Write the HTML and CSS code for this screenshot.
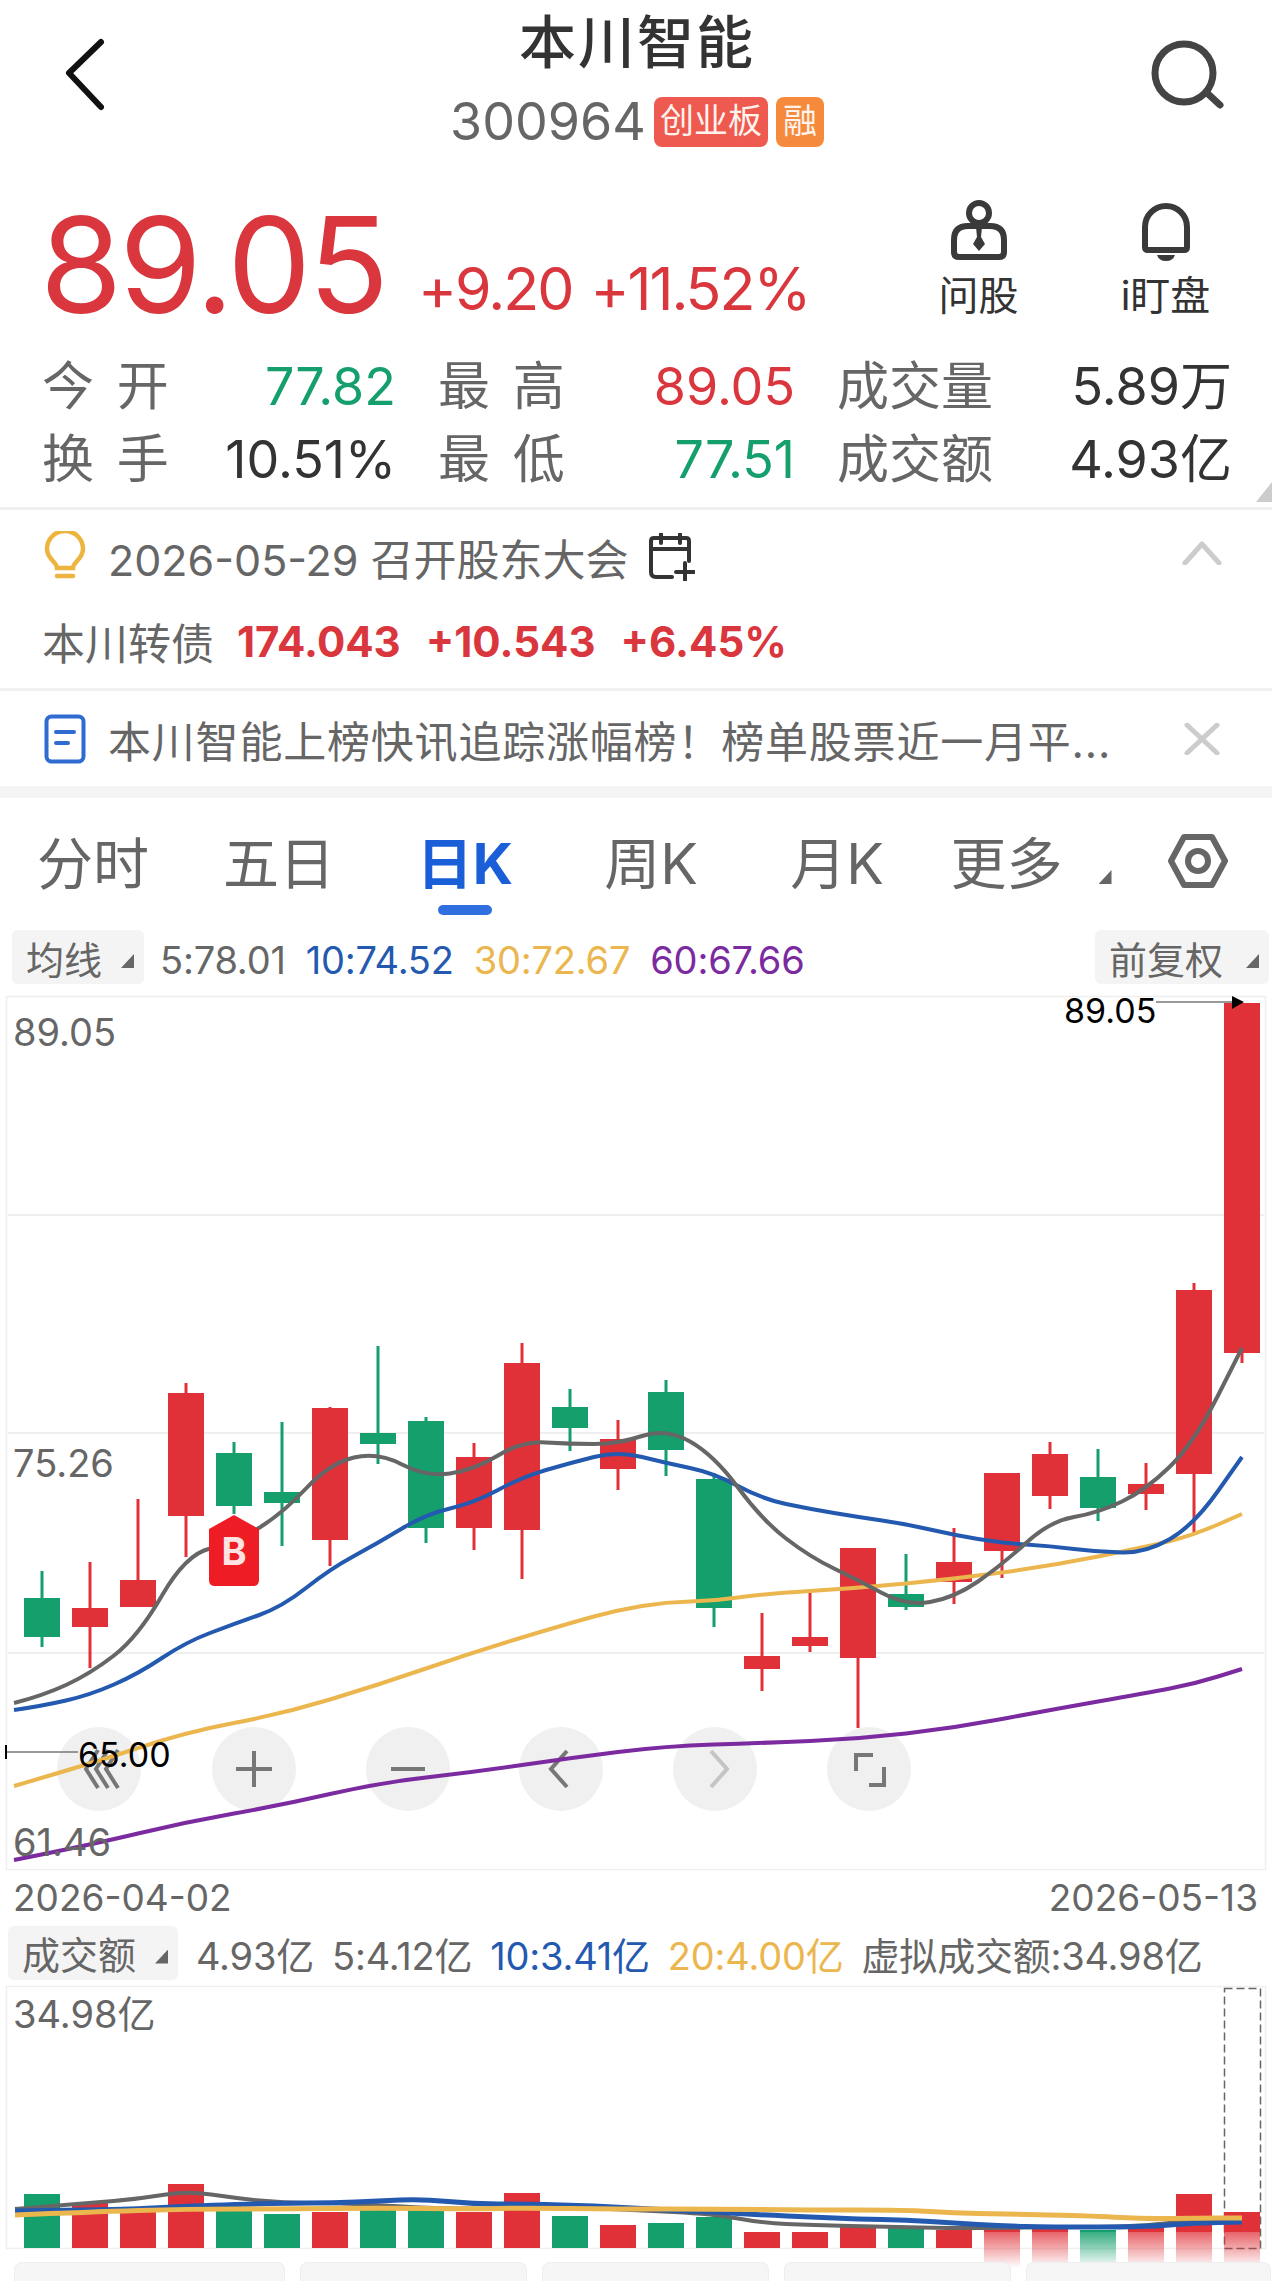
FILE: index.html
```
<!DOCTYPE html>
<html>
<head>
  <title>本川智能 300964</title>
  <meta name="viewport" content="width=device-width, initial-scale=1.0">
  <link rel="stylesheet" href="styles.css">
</head>
<body>
  <div class="header">
    <svg class="icon back-icon" viewBox="0 0 48 78"><path d="M41 6 L9 37 L41 71" /></svg>
    <div class="title-block">
      <h1 class="title">本川智能</h1>
      <div class="sub-title">
        <span class="code">300964</span>
        <span class="badge badge-red">创业板</span>
        <span class="badge badge-orange">融</span>
      </div>
    </div>
    <svg class="icon search-icon" viewBox="0 0 80 72"><circle cx="36" cy="34" r="29" /><path d="M59 54 L72 66" /></svg>
  </div>

  <div class="quote">
    <span class="price">89.05</span>
    <span class="change">+9.20</span>
    <span class="change">+11.52%</span>
    <div class="quick-links">
      <div class="quick-link">
        <svg class="icon" viewBox="0 0 60 62">
          <circle cx="30" cy="13" r="10" />
          <path d="M19 26 H41 Q55 26 55 40 V52 Q55 57 50 57 H10 Q5 57 5 52 V40 Q5 26 19 26 Z" />
          <path class="solid" d="M27 27 H33 L32 37 L36 44 L30 51 L24 44 L28 37 Z" />
        </svg>
        <span>问股</span>
      </div>
      <div class="quick-link">
        <svg class="icon" viewBox="0 0 60 62">
          <path d="M9 47 V27 A21 21 0 0 1 51 27 V47 Q51 50 48 50 H12 Q9 50 9 47 Z" />
          <path class="solid" d="M21 55 H39 Q37 61 30 61 Q23 61 21 55 Z" />
        </svg>
        <span>i盯盘</span>
      </div>
    </div>
  </div>

  <div class="stats">
    <div class="stat"><span class="stat-label spaced">今 开</span><span class="green">77.82</span></div>
    <div class="stat"><span class="stat-label spaced">最 高</span><span class="red">89.05</span></div>
    <div class="stat"><span class="stat-label">成交量</span><span>5.89万</span></div>
    <div class="stat"><span class="stat-label spaced">换 手</span><span>10.51%</span></div>
    <div class="stat"><span class="stat-label spaced">最 低</span><span class="green">77.51</span></div>
    <div class="stat"><span class="stat-label">成交额</span><span>4.93亿</span></div>
    <i class="corner-mark"></i>
  </div>

  <div class="notice">
    <div class="notice-row">
      <svg class="icon bulb-icon" viewBox="0 0 42 52">
        <path d="M13 37 C13 31 3 28 3 18 A18 18 0 0 1 39 18 C39 28 29 31 29 37 Z" />
        <path d="M13 45 H29" />
      </svg>
      <span class="notice-date">2026-05-29 召开股东大会</span>
      <svg class="icon calendar-icon" viewBox="0 0 48 48">
        <path d="M4 16 V8 Q4 5 7 5 H39 Q42 5 42 8 V28 M4 16 H42 M4 16 V39 Q4 44 9 44 H25 M14 1 V10 M33 1 V10 M29 39 H47 M38 30 V47" />
      </svg>
      <svg class="icon chevron-icon" viewBox="0 0 40 24"><path d="M3 22 L20 3 L37 22" /></svg>
    </div>
    <div class="bond-row">
      <span class="bond-name">本川转债</span>
      <b>174.043</b>
      <b>+10.543</b>
      <b>+6.45%</b>
    </div>
  </div>

  <div class="news">
    <svg class="icon doc-icon" viewBox="0 0 42 50">
      <rect x="2.5" y="2.5" width="37" height="45" rx="5" />
      <path d="M12 18 H30 M12 29 H24" />
    </svg>
    <span class="news-text">本川智能上榜快讯追踪涨幅榜！榜单股票近一月平...</span>
    <svg class="icon close-icon" viewBox="0 0 40 32"><path d="M5 2 L35 30 M35 2 L5 30" /></svg>
  </div>

  <div class="band"></div>

  <div class="tabs">
    <span class="tab">分时</span>
    <span class="tab">五日</span>
    <span class="tab active">日K</span>
    <span class="tab">周K</span>
    <span class="tab">月K</span>
    <span class="tab more">更多<i class="caret"></i></span>
    <svg class="icon gear-icon" viewBox="0 0 60 60">
      <path d="M16 6 H44 L57 30 L44 54 H16 L3 30 Z" />
      <circle cx="30" cy="30" r="10" />
    </svg>
  </div>

  <div class="legend">
    <span class="pill">均线<i class="caret"></i></span>
    <span class="ma ma5 first">5:78.01</span>
    <span class="ma ma10">10:74.52</span>
    <span class="ma ma30">30:72.67</span>
    <span class="ma ma60">60:67.66</span>
    <span class="pill pill-right">前复权<i class="caret"></i></span>
  </div>

  <svg id="kline" class="kline" viewBox="0 996 1272 874"></svg>

  <div class="dates">
    <span>2026-04-02</span>
    <span>2026-05-13</span>
  </div>

  <div class="legend legend-volume">
    <span class="pill">成交额<i class="caret"></i></span>
    <span class="ma ma5 first">4.93亿</span>
    <span class="ma ma5">5:4.12亿</span>
    <span class="ma ma10">10:3.41亿</span>
    <span class="ma ma20">20:4.00亿</span>
    <span class="ma ma5">虚拟成交额:34.98亿</span>
  </div>

  <svg id="volume" class="volume" viewBox="0 1986 1272 262"></svg>

  <div class="bottom-pills">
    <span></span><span></span><span></span><span></span><span></span>
  </div>

  <script>
    const RED = '#e03138';
    const GREEN = '#149f6c';
    const GRAY = '#666666';
    const BLUE = '#2459b0';
    const YELLOW = '#ecb64e';
    const PURPLE = '#7b2aa0';

    // [colour, wick top, body top, body bottom, wick bottom]
    const candles = [
      ['g', 1571, 1598, 1637, 1647], ['r', 1562, 1608, 1627, 1668], ['r', 1499, 1580, 1607, 1607],
      ['r', 1383, 1393, 1516, 1557], ['g', 1442, 1453, 1506, 1514], ['g', 1422, 1492, 1503, 1546],
      ['r', 1407, 1408, 1540, 1566], ['g', 1346, 1433, 1444, 1464], ['g', 1417, 1421, 1528, 1543],
      ['r', 1443, 1457, 1528, 1550], ['r', 1343, 1363, 1530, 1579], ['g', 1389, 1407, 1428, 1451],
      ['r', 1420, 1439, 1469, 1490], ['g', 1380, 1392, 1450, 1476], ['g', 1473, 1479, 1608, 1627],
      ['r', 1613, 1656, 1669, 1691], ['r', 1591, 1637, 1646, 1652], ['r', 1548, 1548, 1658, 1728],
      ['g', 1554, 1594, 1607, 1610], ['r', 1528, 1562, 1582, 1604], ['r', 1473, 1473, 1551, 1578],
      ['r', 1442, 1454, 1496, 1509], ['g', 1449, 1477, 1508, 1521], ['r', 1463, 1484, 1494, 1510],
      ['r', 1283, 1290, 1474, 1535], ['r', 1003, 1003, 1353, 1363]
    ];

    const ma5 = [[14, 1703], [42, 1696], [90, 1674], [138, 1637], [186, 1554], [234, 1543], [282, 1514], [330, 1463], [378, 1452], [426, 1477], [474, 1470], [522, 1441], [570, 1444], [618, 1444], [666, 1428], [714, 1455], [762, 1520], [810, 1557], [858, 1580], [906, 1606], [954, 1598], [1002, 1565], [1050, 1521], [1098, 1513], [1146, 1490], [1194, 1443], [1242, 1348]];
    const ma10 = [[14, 1710], [42, 1706], [90, 1695], [138, 1674], [186, 1642], [234, 1624], [282, 1607], [330, 1569], [378, 1543], [426, 1514], [474, 1503], [522, 1477], [570, 1463], [618, 1451], [666, 1463], [714, 1473], [762, 1499], [810, 1509], [858, 1517], [906, 1524], [954, 1535], [1002, 1543], [1050, 1546], [1098, 1552], [1146, 1553], [1194, 1525], [1242, 1457]];
    const ma30 = [[14, 1786], [90, 1764], [186, 1732], [282, 1714], [378, 1685], [474, 1652], [570, 1623], [618, 1610], [666, 1602], [714, 1601], [762, 1594], [858, 1588], [954, 1579], [1050, 1566], [1146, 1547], [1194, 1535], [1242, 1514]];
    const ma60 = [[14, 1860], [90, 1845], [186, 1822], [282, 1805], [378, 1783], [474, 1772], [570, 1758], [666, 1746], [762, 1743], [858, 1739], [954, 1728], [1050, 1710], [1146, 1693], [1194, 1684], [1242, 1669]];

    const volumeTops = [2194, 2203, 2210, 2184, 2210, 2214, 2212, 2207, 2210, 2212, 2193, 2216, 2225, 2223, 2217, 2232, 2232, 2226, 2228, 2230, 2228, 2227, 2230, 2227, 2194, 2212];
    const volColors = 'grrrggrggrrgrggrrrgrrrgrrr';
    const vol5 = [[15, 2209], [89, 2203], [138, 2199], [187, 2191], [235, 2198], [284, 2203], [333, 2203], [378, 2205], [426, 2208], [487, 2209], [568, 2207], [633, 2210], [714, 2214], [762, 2223], [811, 2225], [892, 2227], [949, 2228], [1002, 2228], [1049, 2227], [1095, 2227], [1145, 2226], [1194, 2220], [1242, 2218]];
    const vol10 = [[15, 2211], [89, 2210], [138, 2209], [187, 2206], [284, 2203], [333, 2203], [378, 2201], [422, 2199], [474, 2204], [522, 2204], [569, 2205], [618, 2207], [666, 2210], [714, 2212], [762, 2215], [811, 2217], [858, 2219], [906, 2220], [954, 2223], [1002, 2226], [1049, 2227], [1145, 2227], [1194, 2223], [1242, 2222]];
    const vol20 = [[15, 2215], [89, 2212], [187, 2209], [284, 2209], [378, 2208], [474, 2209], [522, 2208], [618, 2209], [714, 2209], [811, 2210], [906, 2210], [954, 2213], [1002, 2214], [1097, 2216], [1145, 2219], [1194, 2218], [1242, 2218]];

    const candleX = i => 42 + i * 48;

    function rect(x, y, w, h, fill) {
      return `<rect x="${x}" y="${y}" width="${w}" height="${h}" fill="${fill}"/>`;
    }

    // Линия средней: углы скругляются через середины отрезков
    function line(points, color, width) {
      let d = `M${points[0][0]} ${points[0][1]}`;
      for (let i = 1; i < points.length - 1; i++) {
        const midX = (points[i][0] + points[i + 1][0]) / 2;
        const midY = (points[i][1] + points[i + 1][1]) / 2;
        d += ` Q${points[i][0]} ${points[i][1]} ${midX} ${midY}`;
      }
      const last = points[points.length - 1];
      d += ` L${last[0]} ${last[1]}`;
      return `<path d="${d}" fill="none" stroke="${color}" stroke-width="${width}" stroke-linejoin="round"/>`;
    }

    function drawKline() {
      let html = '';
      html += `<rect class="frame" x="6.5" y="996.5" width="1259" height="873"/>`;
      [1215, 1433, 1653].forEach(y => {
        html += `<path class="grid" d="M8 ${y} H1264"/>`;
      });

      // Кнопки управления графиком лежат под свечами
      const buttons = [
        [99, 'M98 1750 L86 1769 L98 1788 M108 1750 L96 1769 L108 1788 M118 1750 L106 1769 L118 1788'],
        [254, 'M254 1751 V1787 M236 1769 H272'],
        [408, 'M391 1769 H425'],
        [561, 'M567 1751 L551 1769 L567 1787'],
        [715, 'M711 1751 L727 1769 L711 1787'],
        [869, 'M873 1755 H856 V1771 M884 1767 V1785 H869']
      ];
      buttons.forEach((b, i) => {
        html += `<circle cx="${b[0]}" cy="1769" r="42" fill="#f0f0f0"/>`;
        html += `<path d="${b[1]}" fill="none" stroke="${i === 4 ? '#c4c4c4' : '#777'}" stroke-width="4"/>`;
      });

      candles.forEach((c, i) => {
        const color = c[0] === 'r' ? RED : GREEN;
        const x = candleX(i);
        html += rect(x - 1.5, c[1], 3, c[4] - c[1], color);
        html += rect(x - 18, c[2], 36, c[3] - c[2], color);
      });

      html += line(ma60, PURPLE, 4);
      html += line(ma30, YELLOW, 4);
      html += line(ma10, BLUE, 4);
      html += line(ma5, GRAY, 4);

      // Метка сделки
      html += '<path d="M234 1515 L259 1529 V1580 Q259 1586 253 1586 H215 Q209 1586 209 1580 V1529 Z" fill="#ee1c25"/>';
      html += '<text class="trade-mark" x="234" y="1565" text-anchor="middle">B</text>';

      html += '<text class="axis" x="13" y="1046">89.05</text>';
      html += '<text class="axis" x="13" y="1477">75.26</text>';
      html += '<text class="axis" x="13" y="1856">61.46</text>';

      // Подписи максимума и минимума
      html += '<path d="M1156 1002 H1232" stroke="#777" stroke-width="1.5"/>';
      html += '<path d="M1232 996 L1244 1002 L1232 1009 Z" fill="#000"/>';
      html += '<text class="peak" x="1064" y="1023">89.05</text>';
      html += '<path d="M6 1752 H78" stroke="#777" stroke-width="1.5"/>';
      html += '<path d="M6 1745 V1759" stroke="#000" stroke-width="2"/>';
      html += '<text class="peak" x="78" y="1767">65.00</text>';
      document.getElementById('kline').innerHTML = html;
    }

    function drawVolume() {
      let html = '<defs><linearGradient id="fade-r" x1="0" y1="0" x2="0" y2="1"><stop offset="0" stop-color="#e03138" stop-opacity="0.75"/><stop offset="1" stop-color="#e03138" stop-opacity="0"/></linearGradient>';
      html += '<linearGradient id="fade-g" x1="0" y1="0" x2="0" y2="1"><stop offset="0" stop-color="#149f6c" stop-opacity="0.85"/><stop offset="1" stop-color="#149f6c" stop-opacity="0"/></linearGradient></defs>';
      html += '<rect class="frame" x="6.5" y="1986.5" width="1259" height="262"/>';
      html += '<text class="axis" x="13" y="2028">34.98亿</text>';
      html += '<rect class="virtual-bar" x="1224.5" y="1988.5" width="36" height="260"/>';
      volumeTops.forEach((top, i) => {
        const x = candleX(i) - 18;
        const isRed = volColors[i] === 'r';
        if (i >= 20) {
          // Нижний край баров размыт
          html += rect(x, top, 36, 2232 - top, isRed ? RED : GREEN);
          html += rect(x, 2232, 36, 36, `url(#fade-${isRed ? 'r' : 'g'})`);
        } else {
          html += rect(x, top, 36, 2248 - top, isRed ? RED : GREEN);
        }
      });
      html += line(vol5, GRAY, 4);
      html += line(vol10, BLUE, 5);
      html += line(vol20, YELLOW, 5);
      document.getElementById('volume').innerHTML = html;
    }

    drawKline();
    drawVolume();
  </script>
</body>
</html>
```
FILE: styles.css
```
body {
  margin: 0;
  width: 1272px;
  height: 2282px;
  overflow: hidden;
  background-color: #fff;
  color: #333;
  font-family: Inter, "Noto Sans CJK SC", sans-serif;
}

svg {
  display: block;
  flex: none;
}

.icon path,
.icon circle,
.icon rect {
  fill: none;
}

.red {
  color: #d9363e;
}

.green {
  color: #149f6c;
}

/* header */
.header {
  height: 190px;
  display: flex;
  justify-content: space-between;
  align-items: flex-start;
  padding: 0 48px 0 60px;
  box-sizing: border-box;
}

.back-icon {
  width: 48px;
  height: 78px;
  margin-top: 36px;
}

.back-icon path {
  stroke: #111;
  stroke-width: 6;
  stroke-linecap: round;
  stroke-linejoin: round;
}

.search-icon {
  width: 80px;
  height: 72px;
  margin-top: 39px;
  margin-right: -4px;
}

.search-icon circle,
.search-icon path {
  stroke: #444;
  stroke-width: 7;
  stroke-linecap: round;
}

.title-block {
  display: flex;
  flex-direction: column;
  align-items: center;
  margin-left: 18px;
}

.title {
  margin: 0;
  height: 86px;
  line-height: 86px;
  font-size: 57px;
  font-weight: 500;
  letter-spacing: 2px;
  color: #333;
}

.sub-title {
  display: flex;
  align-items: center;
  gap: 8px;
  margin-top: 11px;
}

.code {
  font-size: 52px;
  color: #666;
  line-height: 50px;
}

.badge {
  height: 50px;
  line-height: 48px;
  padding: 0 6px;
  border-radius: 8px;
  font-size: 34px;
  color: #fff3ee;
}

.badge-red {
  background-color: #ee5a4f;
}

.badge-orange {
  background-color: #f58a3c;
  padding: 0 7px;
}

/* quote */
.quote {
  height: 150px;
  position: relative;
  display: flex;
  align-items: flex-end;
  padding-left: 40px;
}

.price {
  font-size: 133px;
  line-height: 150px;
  letter-spacing: -3px;
  color: #d9363e;
  margin-right: 32px;
}

.change {
  font-size: 59px;
  line-height: 60px;
  letter-spacing: -2px;
  color: #d9363e;
  margin-right: 18px;
  margin-bottom: 21px;
}

.quick-links {
  display: grid;
  grid-template-columns: 187px 187px;
  margin-left: auto;
  margin-right: 13px;
  margin-top: 10px;
  align-self: flex-start;
}

.quick-link {
  display: flex;
  flex-direction: column;
  align-items: center;
  font-size: 40px;
  line-height: 50px;
  color: #333;
  gap: 9px;
}

.quick-link svg {
  width: 60px;
  height: 62px;
}

.quick-link path,
.quick-link circle {
  stroke: #3a3a3a;
  stroke-width: 6;
}

.quick-link path.solid {
  fill: #3a3a3a;
  stroke: none;
}

/* stats */
.stats {
  height: 170px;
  box-sizing: border-box;
  position: relative;
  display: grid;
  grid-template-columns: 354px 357px 395px;
  column-gap: 42px;
  grid-auto-rows: 73px;
  padding: 10px 0 0 42px;
  border-bottom: 3px solid #f0f0f0;
  font-size: 52px;
  line-height: 73px;
}

.stat {
  display: flex;
  justify-content: space-between;
}

.stat-label {
  font-size: 52px;
  color: #666;
}

.spaced {
  word-spacing: 8px;
}

.corner-mark {
  position: absolute;
  right: 0;
  bottom: 5px;
  width: 16px;
  height: 20px;
  background-color: #ccc;
  clip-path: polygon(100% 0, 100% 100%, 0 100%);
}

/* notice */
.notice {
  height: 181px;
  box-sizing: border-box;
  border-bottom: 3px solid #f0f0f0;
  padding-left: 44px;
}

.notice-row {
  display: flex;
  align-items: center;
  height: 94px;
  color: #666;
}

.bulb-icon {
  width: 42px;
  height: 52px;
}

.bulb-icon path {
  stroke: #edb53f;
  stroke-width: 4.5;
  stroke-linecap: round;
}

.notice-date {
  font-size: 43px;
  margin-left: 22px;
}

.calendar-icon {
  width: 48px;
  height: 48px;
  margin-left: 18px;
}

.calendar-icon path {
  stroke: #333;
  stroke-width: 4;
  stroke-linecap: round;
}

.chevron-icon {
  width: 40px;
  height: 24px;
  margin-left: auto;
  margin-right: 50px;
  margin-top: -8px;
}

.chevron-icon path,
.close-icon path {
  stroke: #ccc;
  stroke-width: 5;
  stroke-linecap: round;
  stroke-linejoin: round;
}

.bond-row {
  display: flex;
  align-items: center;
  margin-left: -2px;
  margin-top: 1px;
  height: 72px;
  gap: 25px;
  font-size: 42px;
  color: #d9363e;
}

.bond-name {
  font-size: 43px;
  color: #666;
  margin-right: -2px;
}

/* news */
.news {
  height: 95px;
  display: flex;
  align-items: center;
  padding-left: 44px;
}

.doc-icon {
  width: 42px;
  height: 50px;
}

.doc-icon rect,
.doc-icon path {
  stroke: #2f6bd0;
  stroke-width: 4;
  stroke-linecap: round;
}

.news-text {
  font-size: 43px;
  color: #666;
  margin-left: 22px;
  letter-spacing: 0.8px;
  white-space: nowrap;
}

.close-icon {
  width: 40px;
  height: 32px;
  margin-left: auto;
  margin-right: 50px;
}

.band {
  height: 12px;
  background-color: #f4f4f4;
}

/* period tabs */
.tabs {
  height: 132px;
  display: grid;
  grid-template-columns: repeat(5, 186px) 170px 1fr;
  align-items: center;
  box-sizing: border-box;
}

.tab {
  position: relative;
  text-align: center;
  font-size: 56px;
  color: #666;
  line-height: 132px;
}

.tab.active {
  color: #1a5fd8;
  font-weight: 700;
}

.tab.active::after {
  content: "";
  position: absolute;
  left: 66px;
  bottom: 15px;
  width: 54px;
  height: 10px;
  border-radius: 5px;
  background-color: #2f6fe0;
}

.tab.more {
  margin-left: -28px;
}

.caret {
  display: inline-block;
  width: 13px;
  height: 14px;
  background-color: #666;
  clip-path: polygon(100% 0, 100% 100%, 0 100%);
}

.tab.more .caret {
  margin-left: 36px;
  margin-right: -60px;
}

.gear-icon {
  width: 60px;
  height: 60px;
  margin-left: 68px;
  margin-top: -6px;
}

.gear-icon path,
.gear-icon circle {
  stroke: #666;
  stroke-width: 6;
  stroke-linejoin: round;
}

/* indicator legend */
.legend {
  height: 54px;
  margin-bottom: 12px;
  display: flex;
  align-items: center;
  padding-left: 12px;
  font-size: 38px;
  letter-spacing: -0.2px;
}

.pill {
  display: flex;
  align-items: center;
  justify-content: space-between;
  box-sizing: border-box;
  width: 132px;
  height: 54px;
  padding: 0 10px 0 14px;
  font-size: 38px;
  letter-spacing: 0;
  color: #666;
  background-color: #f4f4f4;
  border-radius: 6px;
}

.pill .caret {
  margin-top: 8px;
}

.pill-right {
  margin-left: auto;
  margin-right: 3px;
  width: 174px;
}

.ma {
  margin-left: 20px;
  margin-top: 5px;
}

.ma.first {
  margin-left: 16px;
}

.ma5 {
  color: #666;
}

.ma10 {
  color: #2459b0;
}

.ma30,
.ma20 {
  color: #ecb64e;
}

.ma60 {
  color: #7b2aa0;
}

/* charts */
.kline {
  width: 1272px;
  height: 874px;
  overflow: visible;
}

.volume {
  width: 1272px;
  height: 262px;
  overflow: visible;
}

.frame {
  fill: none;
  stroke: #efefef;
  stroke-width: 1.5;
}

.grid {
  stroke: #efefef;
  stroke-width: 2;
}

.virtual-bar {
  fill: none;
  stroke: #666;
  stroke-width: 1.5;
  stroke-dasharray: 8 4;
}

.axis {
  font-size: 38px;
  fill: #666;
}

.peak {
  font-size: 34px;
  fill: #000;
}

.trade-mark {
  font-size: 38px;
  font-weight: 700;
  fill: #ffe3e3;
}

.dates {
  height: 55px;
  display: flex;
  justify-content: space-between;
  align-items: center;
  padding: 0 14px 0 13px;
  font-size: 37px;
  color: #666;
}

.legend-volume {
  height: 55px;
  margin-bottom: 6px;
  padding-left: 8px;
}

.legend-volume .pill {
  width: 170px;
}

.legend-volume .ma {
  margin-left: 18px;
  margin-top: 2px;
}

.bottom-pills {
  display: grid;
  grid-template-columns: 271px 227px 227px 227px 245px;
  gap: 15px;
  margin: 14px 0 0 14px;
}

.bottom-pills span {
  height: 18px;
  background-color: #f6f6f6;
  border: 1px solid #eee;
  border-bottom: none;
  border-radius: 8px 8px 0 0;
}
```
